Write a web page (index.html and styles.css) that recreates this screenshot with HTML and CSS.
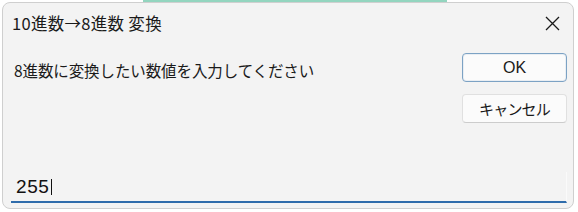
FILE: index.html
```html
<!DOCTYPE html>
<html lang="ja">
<head>
<meta charset="utf-8">
<title>10進数→8進数 変換</title>
<link rel="stylesheet" href="styles.css">
</head>
<body>
<div class="backdrop-strip"></div>
<div class="dialog">
  <div class="titlebar">
    <span class="title">10進数→8進数 変換</span>
    <svg class="close" width="15" height="15" viewBox="0 0 15 15" aria-label="閉じる">
      <path d="M1 1 L14 14 M14 1 L1 14" stroke="#1a1a1a" stroke-width="1.3" fill="none"/>
    </svg>
  </div>
  <div class="body">
    <p class="prompt">8進数に変換したい数値を入力してください</p>
    <div class="buttons">
      <button class="btn btn-default">OK</button>
      <button class="btn btn-cancel">キャンセル</button>
    </div>
  </div>
  <div class="field"><span class="value">255</span><span class="caret"></span></div>
</div>
</body>
</html>
```
FILE: styles.css
```css
html, body {
  margin: 0;
  padding: 0;
  background: #ffffff;
}
body {
  width: 578px;
  height: 212px;
  overflow: hidden;
}
.backdrop-strip {
  height: 2px;
  width: 304px;
  margin-left: 143px;
  background: #93d5bf;
}
.dialog {
  box-sizing: border-box;
  margin: 0 4px 0 2px;
  height: 207px;
  border: 1px solid #cfcfcf;
  border-radius: 8px;
  background: #f3f3f3;
  display: flex;
  flex-direction: column;
  font-family: "Noto Sans CJK JP", "Noto Sans", sans-serif;
  color: #1a1a1a;
}
.titlebar {
  height: 40px;
  display: flex;
  align-items: center;
  justify-content: space-between;
  padding: 0 13px 0 9px;
}
.title {
  font-size: 16.5px;
  line-height: 20px;
  letter-spacing: 0.3px;
}
.close {
  display: block;
}
.body {
  flex: 1;
  display: grid;
  grid-template-columns: 1fr 105px;
  padding: 0 6px 0 11px;
}
.prompt {
  margin: 17px 0 0 0;
  font-size: 15.5px;
  line-height: 20px;
  letter-spacing: -0.1px;
}
.buttons {
  display: flex;
  flex-direction: column;
  gap: 12px;
  padding-top: 10px;
}
.btn {
  box-sizing: border-box;
  height: 29px;
  margin: 0;
  padding: 0;
  border-radius: 4px;
  background: #fbfbfb;
  color: #1a1a1a;
  font-family: "Liberation Sans", "Noto Sans CJK JP", sans-serif;
  font-size: 16px;
  line-height: 1;
}
.btn-default {
  border: 1px solid #7ca2c4;
  box-shadow: inset 0 0 0 1px #e9eef3;
}
.btn-cancel {
  border: 1px solid #e0e0e0;
  border-bottom-color: #cccccc;
  font-family: "Noto Sans CJK JP", sans-serif;
  font-size: 15px;
  letter-spacing: -0.8px;
}
.field {
  box-sizing: border-box;
  height: 31px;
  margin: 0 6px 5px 8px;
  padding-left: 5px;
  display: flex;
  align-items: center;
  border-bottom: 2px solid #2f6cab;
  border-right: 1px solid #fafafa;
  font-family: "Liberation Sans", sans-serif;
  font-size: 19px;
  letter-spacing: 0.6px;
  color: #111;
}
.caret {
  display: inline-block;
  width: 1px;
  height: 16px;
  margin-left: 1px;
  background: #111;
}
```
